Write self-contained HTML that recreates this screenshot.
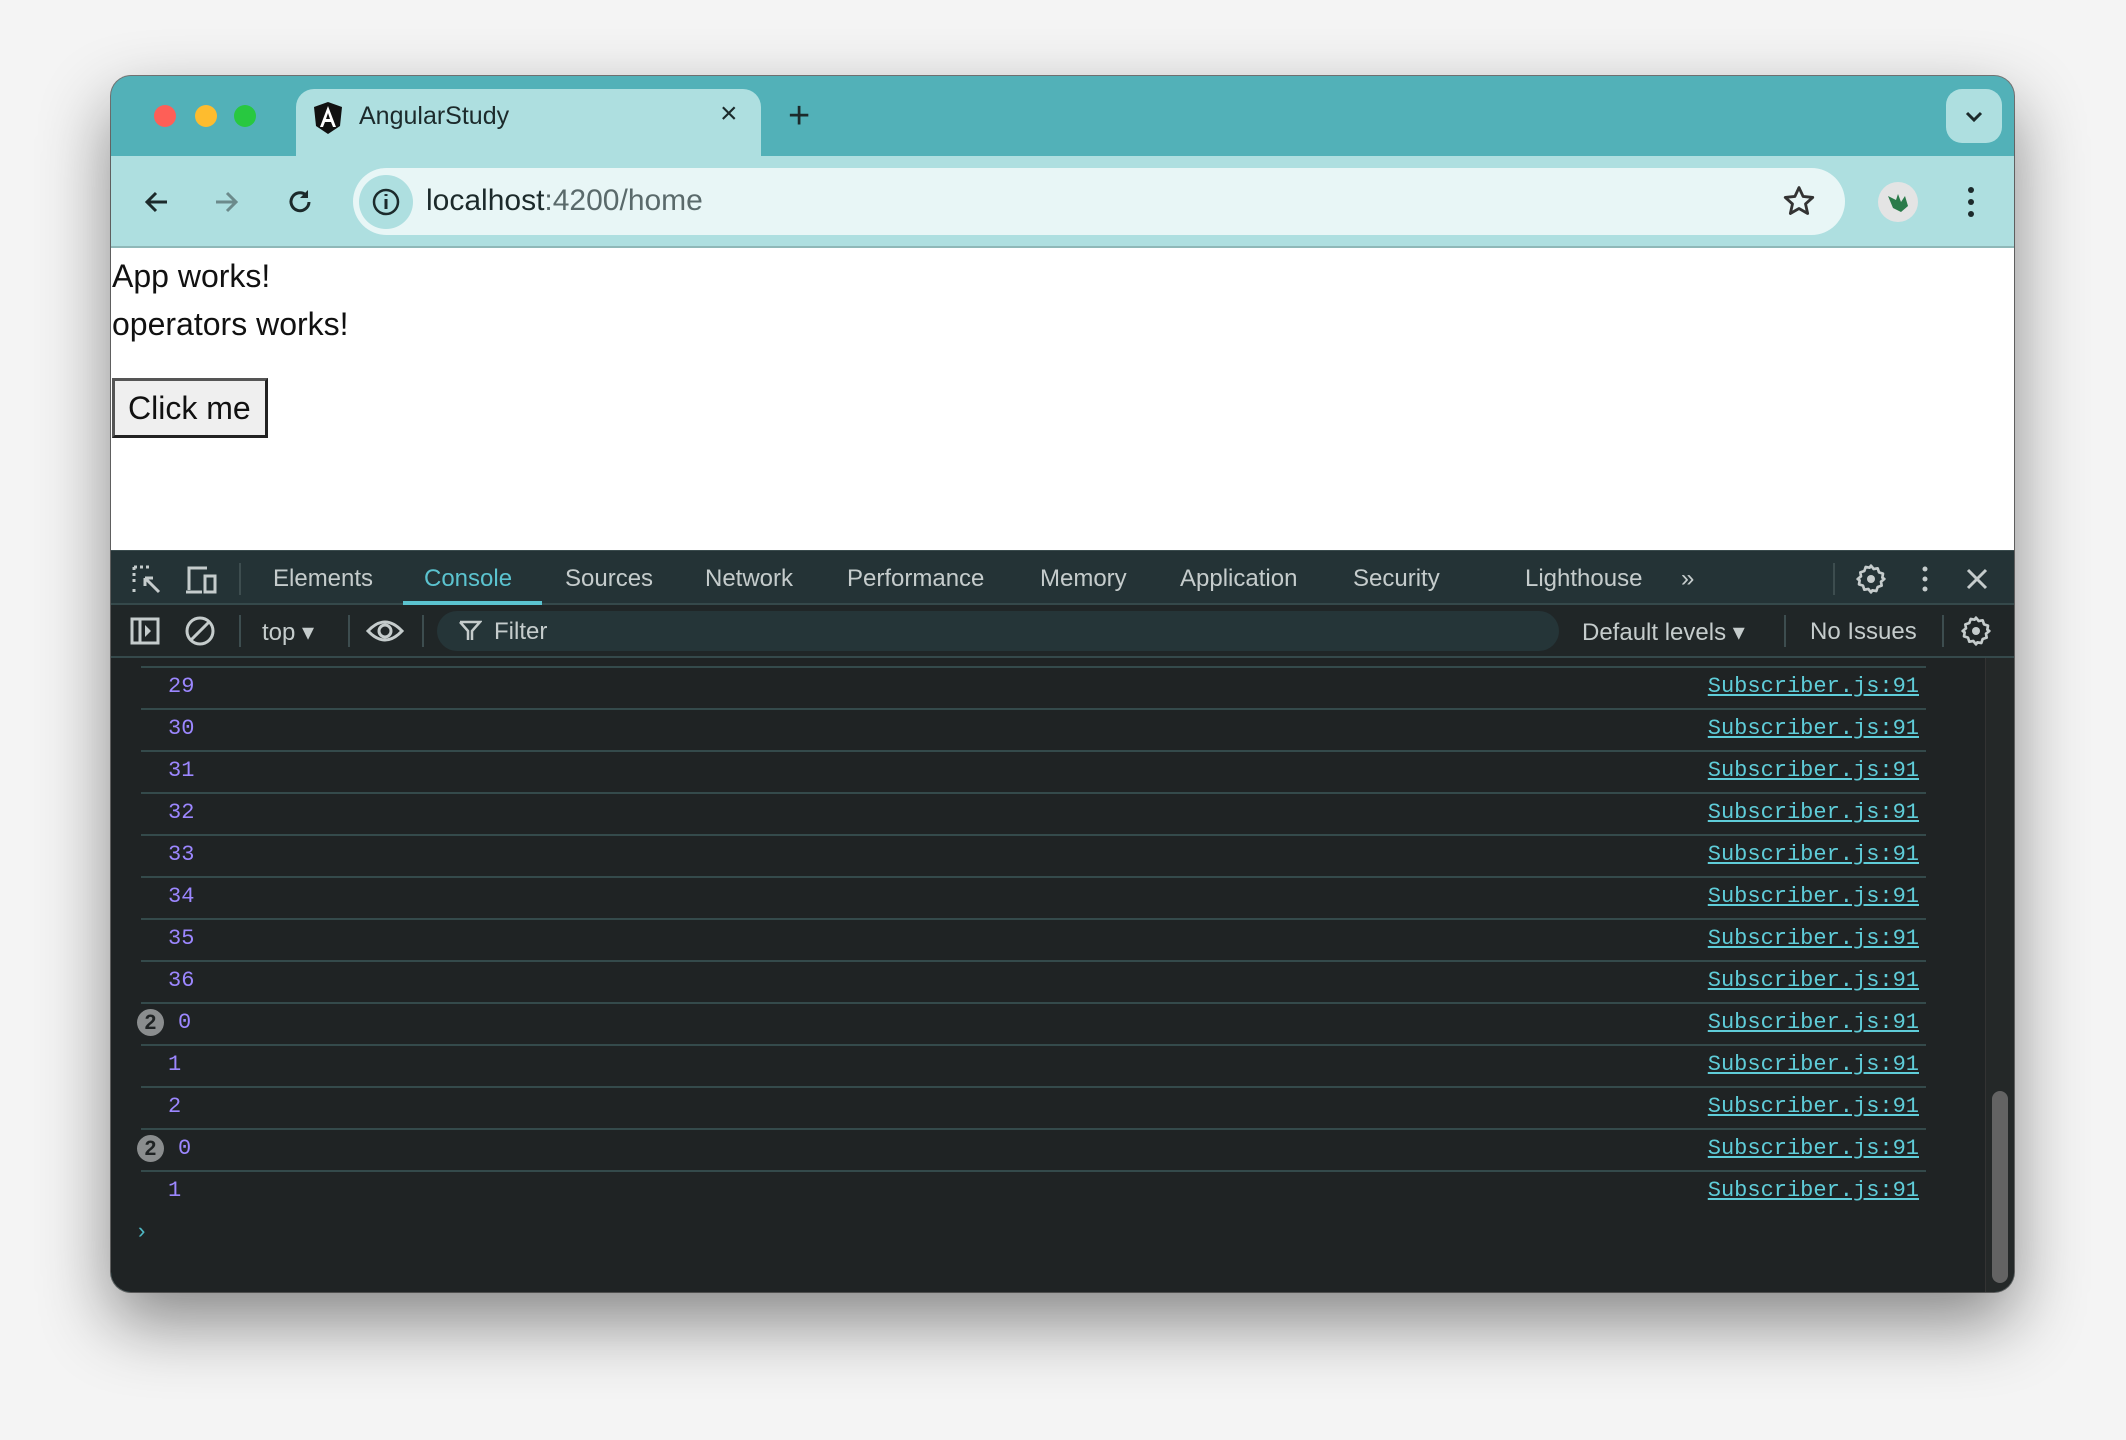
<!DOCTYPE html>
<html><head><meta charset="utf-8"><style>
*{margin:0;padding:0;box-sizing:border-box}
body{width:2126px;height:1440px;background:#f4f4f4;position:relative;overflow:hidden;font-family:"Liberation Sans",sans-serif}
.win{position:absolute;left:111px;top:76px;width:1903px;height:1216px;border-radius:20px;overflow:hidden;background:#52b1b8;box-shadow:0 30px 70px rgba(0,0,0,.45),0 0 0 1px rgba(0,0,0,.5)}
.a{position:absolute}
.dot{position:absolute;top:105px;width:22px;height:22px;border-radius:50%}
.tab{position:absolute;left:185px;top:13px;width:465px;height:70px;background:#aedfe0;border-radius:18px 18px 0 0}
.tb{position:absolute;left:0;top:80px;width:1903px;height:92px;background:#aedfe0;border-bottom:2px solid #8fb8b8}
.url{position:absolute;left:242px;top:12px;width:1492px;height:67px;border-radius:34px;background:#e8f6f6}
.content{position:absolute;left:0;top:172px;width:1903px;height:302px;background:#fff;color:#111}
.dt{position:absolute;left:0;top:474px;width:1903px;height:742px;background:#1f2324}
.tabs{position:absolute;left:0;top:0;width:1903px;height:55px;background:#243336;border-bottom:2px solid #35494b;border-top:1px solid #3a4b4d}
.tabs span{position:absolute;top:14px;font-size:24px;color:#c5cccc}
.tool{position:absolute;left:0;top:55px;width:1903px;height:53px;background:#202627;border-bottom:2px solid #35494b}
.tool span{position:absolute;top:13px;font-size:24px;color:#c5cccc}
.sep{position:absolute;width:2px;background:#3d4d4f}
.row{position:absolute;left:30px;width:1785px;height:42px;border-top:2px solid #344a4b;font-family:"Liberation Mono",monospace;font-size:22px}
.n{position:absolute;left:27px;top:6px;color:#9c87ff}
.l{position:absolute;right:7px;top:6px;color:#5fcdd9;text-decoration:underline}
.b{position:absolute;left:-4px;top:5px;width:27px;height:27px;border-radius:50%;background:#8a8d8e;color:#1f2324;font-family:"Liberation Sans",sans-serif;font-weight:bold;font-size:21px;text-align:center;line-height:27px}
</style></head><body>
<div class="win">
  <div class="dot" style="left:43px;top:29px;background:#fe5f57"></div>
  <div class="dot" style="left:84px;top:29px;background:#febc2e"></div>
  <div class="dot" style="left:123px;top:29px;background:#28c840"></div>
  <div class="tab">
    <svg class="a" style="left:16px;top:12px" width="32" height="34" viewBox="0 0 32 34"><path d="M16 1L2 6l2 19 12 8 12-8 2-19z" fill="#111"/><path d="M16 5L8 26h3l2-5h6l2 5h3zM14 18l2-6 2 6z" fill="#fff"/></svg>
    <div class="a" style="left:63px;top:13px;font-size:25px;color:#1c2a2b">AngularStudy</div>
    <div class="a" style="left:424px;top:8px;font-size:30px;color:#1c2a2b">×</div>
  </div>
  <div class="a" style="left:677px;top:19px;font-size:38px;color:#1c2a2b;font-weight:300">+</div>
  <div class="a" style="left:1835px;top:13px;width:56px;height:54px;border-radius:16px;background:#aedfe0"><svg width="56" height="54"><path d="M21 24l7 7 7-7" stroke="#1c2a2b" stroke-width="3" fill="none"/></svg></div>
  <div class="tb">
    <svg class="a" style="left:30px;top:30px" width="32" height="32"><path d="M26 16H6M15 7l-9 9 9 9" stroke="#1c2a2b" stroke-width="3" fill="none"/></svg>
    <svg class="a" style="left:99px;top:30px" width="32" height="32"><path d="M6 16h20M17 7l9 9-9 9" stroke="#6c8a8b" stroke-width="3" fill="none"/></svg>
    <svg class="a" style="left:173px;top:30px" width="32" height="32"><path d="M25 16a9 9 0 1 1-3-7" stroke="#1c2a2b" stroke-width="3" fill="none"/><path d="M24 4v8h-8" fill="#1c2a2b"/></svg>
    <div class="url">
      <div class="a" style="left:6px;top:7px;width:54px;height:54px;border-radius:50%;background:#aedfe0"><svg width="54" height="54"><circle cx="27" cy="27" r="12" stroke="#1c2a2b" stroke-width="2.5" fill="none"/><path d="M27 24v10M27 19v2" stroke="#1c2a2b" stroke-width="3"/></svg></div>
      <div class="a" style="left:73px;top:16px;font-size:30px;color:#1c2a2b">localhost<span style="color:#5a6a6b">:4200/home</span></div>
      <svg class="a" style="left:1429px;top:16px" width="34" height="34" viewBox="0 0 24 24"><path d="M12 2.5l2.9 6.3 6.8.7-5.1 4.6 1.5 6.7L12 17.3l-6.1 3.5 1.5-6.7L2.3 9.5l6.8-.7z" stroke="#333" stroke-width="2" fill="none" stroke-linejoin="round"/></svg>
    </div>
    <div class="a" style="left:1767px;top:26px;width:40px;height:40px;border-radius:50%;background:#e4e4e4"><svg width="40" height="40"><path d="M10 14l8 4 2-6 3 8 4-6 3 10-7 6-8-4z" fill="#2b7b4a"/></svg></div>
    <svg class="a" style="left:1850px;top:26px" width="20" height="40"><circle cx="10" cy="8" r="3" fill="#1c2a2b"/><circle cx="10" cy="20" r="3" fill="#1c2a2b"/><circle cx="10" cy="32" r="3" fill="#1c2a2b"/></svg>
  </div>
  <div class="content">
    <div class="a" style="left:1px;top:10px;font-size:32px">App works!</div>
    <div class="a" style="left:1px;top:58px;font-size:32px">operators works!</div>
    <div class="a" style="left:1px;top:130px;width:156px;height:60px;background:#efefef;border:3px solid #222;border-left-color:#555;border-top-color:#555;font-size:32px;padding:9px 0 0 13px">Click me</div>
  </div>
  <div class="dt">
    <div class="tabs">
      <svg class="a" style="left:20px;top:13px" width="32" height="32"><path d="M3 3h18M3 3v18M3 28v-3" stroke="#c5cccc" stroke-width="3" stroke-dasharray="3 3" fill="none"/><path d="M14 14l14 14M14 14h8M14 14v8" stroke="#c5cccc" stroke-width="3" fill="none"/></svg>
      <svg class="a" style="left:74px;top:13px" width="34" height="32"><path d="M4 26V4h18M1 28h16" stroke="#c5cccc" stroke-width="3" fill="none"/><rect x="20" y="12" width="10" height="16" stroke="#c5cccc" stroke-width="3" fill="none"/></svg>
      <div class="sep" style="left:128px;top:12px;height:32px"></div>
      <span style="left:162px">Elements</span>
      <span style="left:313px;color:#5bc3cf">Console</span>
      <div class="a" style="left:292px;top:50px;width:139px;height:4px;background:#5bc3cf"></div>
      <span style="left:454px">Sources</span>
      <span style="left:594px">Network</span>
      <span style="left:736px">Performance</span>
      <span style="left:929px">Memory</span>
      <span style="left:1069px">Application</span>
      <span style="left:1242px">Security</span>
      <span style="left:1414px">Lighthouse</span>
      <span style="left:1570px">»</span>
      <div class="sep" style="left:1722px;top:12px;height:32px"></div>
      <svg class="a" style="left:1744px;top:12px" width="32" height="32" viewBox="0 0 24 24"><path d="M12 2l2 2.5 3-.5 1 3 3 1-.5 3L22 12l-2.5 2 .5 3-3 1-1 3-3-.5L12 22l-2-2.5-3 .5-1-3-3-1 .5-3L2 12l2.5-2-.5-3 3-1 1-3 3 .5z" stroke="#c5cccc" stroke-width="2" fill="none" stroke-linejoin="round"/><circle cx="12" cy="12" r="3" fill="#c5cccc"/></svg>
      <svg class="a" style="left:1804px;top:12px" width="20" height="32"><circle cx="10" cy="6" r="2.5" fill="#c5cccc"/><circle cx="10" cy="16" r="2.5" fill="#c5cccc"/><circle cx="10" cy="26" r="2.5" fill="#c5cccc"/></svg>
      <svg class="a" style="left:1852px;top:14px" width="28" height="28"><path d="M5 5l18 18M23 5L5 23" stroke="#c5cccc" stroke-width="3"/></svg>
    </div>
    <div class="tool">
      <svg class="a" style="left:18px;top:10px" width="32" height="32"><rect x="3" y="4" width="26" height="24" stroke="#c5cccc" stroke-width="3" fill="none"/><path d="M11 4v24" stroke="#c5cccc" stroke-width="3"/><path d="M16 10l6 6-6 6z" fill="#c5cccc"/></svg>
      <svg class="a" style="left:73px;top:10px" width="32" height="32"><circle cx="16" cy="16" r="13" stroke="#c5cccc" stroke-width="3" fill="none"/><path d="M7 25L25 7" stroke="#c5cccc" stroke-width="3"/></svg>
      <div class="sep" style="left:128px;top:10px;height:32px"></div>
      <span style="left:151px">top ▾</span>
      <div class="sep" style="left:237px;top:10px;height:32px"></div>
      <svg class="a" style="left:255px;top:10px" width="38" height="32"><path d="M2 16Q19 -2 36 16Q19 34 2 16z" stroke="#c5cccc" stroke-width="3" fill="none"/><circle cx="19" cy="16" r="6" stroke="#c5cccc" stroke-width="3" fill="none"/></svg>
      <div class="sep" style="left:311px;top:10px;height:32px"></div>
      <div class="a" style="left:326px;top:6px;width:1122px;height:40px;border-radius:20px;background:#253538"></div>
      <svg class="a" style="left:347px;top:14px" width="24" height="24"><path d="M2 3h20l-8 9v9M10 21v-9L2 3" stroke="#c5cccc" stroke-width="2.5" fill="none"/></svg>
      <span style="left:383px">Filter</span>
      <span style="left:1471px">Default levels ▾</span>
      <div class="sep" style="left:1673px;top:10px;height:32px"></div>
      <span style="left:1699px">No Issues</span>
      <div class="sep" style="left:1831px;top:10px;height:32px"></div>
      <svg class="a" style="left:1849px;top:10px" width="32" height="32" viewBox="0 0 24 24"><path d="M12 2l2 2.5 3-.5 1 3 3 1-.5 3L22 12l-2.5 2 .5 3-3 1-1 3-3-.5L12 22l-2-2.5-3 .5-1-3-3-1 .5-3L2 12l2.5-2-.5-3 3-1 1-3 3 .5z" stroke="#c5cccc" stroke-width="2" fill="none" stroke-linejoin="round"/><circle cx="12" cy="12" r="3" fill="#c5cccc"/></svg>
    </div>
    <div class="row" style="top:116px"><div class="n">29</div><div class="l">Subscriber.js:91</div></div>
    <div class="row" style="top:158px"><div class="n">30</div><div class="l">Subscriber.js:91</div></div>
    <div class="row" style="top:200px"><div class="n">31</div><div class="l">Subscriber.js:91</div></div>
    <div class="row" style="top:242px"><div class="n">32</div><div class="l">Subscriber.js:91</div></div>
    <div class="row" style="top:284px"><div class="n">33</div><div class="l">Subscriber.js:91</div></div>
    <div class="row" style="top:326px"><div class="n">34</div><div class="l">Subscriber.js:91</div></div>
    <div class="row" style="top:368px"><div class="n">35</div><div class="l">Subscriber.js:91</div></div>
    <div class="row" style="top:410px"><div class="n">36</div><div class="l">Subscriber.js:91</div></div>
    <div class="row" style="top:452px"><div class="b">2</div><div class="n" style="left:37px">0</div><div class="l">Subscriber.js:91</div></div>
    <div class="row" style="top:494px"><div class="n">1</div><div class="l">Subscriber.js:91</div></div>
    <div class="row" style="top:536px"><div class="n">2</div><div class="l">Subscriber.js:91</div></div>
    <div class="row" style="top:578px"><div class="b">2</div><div class="n" style="left:37px">0</div><div class="l">Subscriber.js:91</div></div>
    <div class="row" style="top:620px"><div class="n">1</div><div class="l">Subscriber.js:91</div></div>
    <div class="a" style="left:24px;top:670px;font-size:22px;color:#4fb8c4;font-family:'Liberation Mono',monospace">›</div>
    <div class="a" style="left:1874px;top:108px;width:29px;height:634px;background:#242828;border-left:1px solid #333"></div>
    <div class="a" style="left:1881px;top:541px;width:16px;height:192px;border-radius:8px;background:#636363"></div>
  </div>
</div>
</body></html>
